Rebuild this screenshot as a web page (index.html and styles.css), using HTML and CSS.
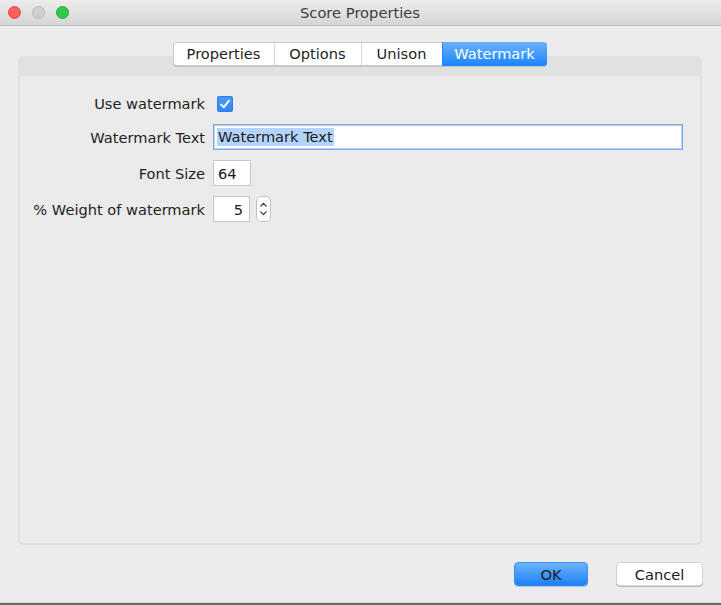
FILE: index.html
```html
<!DOCTYPE html>
<html>
<head>
<meta charset="utf-8">
<title>Score Properties</title>
<link rel="stylesheet" href="styles.css">
</head>
<body>
<div class="window">
  <div class="titlebar">
    <div class="lights">
      <span class="light red"></span>
      <span class="light gray"></span>
      <span class="light green"></span>
    </div>
    <div class="title">Score Properties</div>
  </div>
  <div class="tabs">
    <div class="tab tab-properties">Properties</div>
    <div class="tab tab-options">Options</div>
    <div class="tab tab-unison">Unison</div>
    <div class="tab tab-watermark active">Watermark</div>
  </div>
  <div class="panel">
    <div class="form">
      <div class="label label-top">Use watermark</div>
      <div class="control control-top">
        <span class="checkbox">
          <svg width="16" height="16" viewBox="0 0 16 16"><path d="M4.2 8.6 L6.9 11.3 L11.9 4.6" fill="none" stroke="#fff" stroke-width="1.9" stroke-linecap="round" stroke-linejoin="round"/></svg>
        </span>
      </div>

      <div class="label">Watermark Text</div>
      <div class="control">
        <div class="field field-wide focused"><span class="sel">Watermark Text</span></div>
      </div>

      <div class="label">Font Size</div>
      <div class="control">
        <div class="field field-small">64</div>
      </div>

      <div class="label">% Weight of watermark</div>
      <div class="control">
        <div class="field field-small align-right">5</div>
        <div class="spinner">
          <svg width="15" height="26" viewBox="0 0 15 26"><path d="M4.8 10.2 L7.5 7.4 L10.2 10.2" fill="none" stroke="#333" stroke-width="1.2" stroke-linecap="round" stroke-linejoin="round"/><path d="M4.8 15.8 L7.5 18.6 L10.2 15.8" fill="none" stroke="#333" stroke-width="1.2" stroke-linecap="round" stroke-linejoin="round"/></svg>
        </div>
      </div>
    </div>
  </div>
  <div class="buttons">
    <div class="btn btn-ok">OK</div>
    <div class="btn btn-cancel">Cancel</div>
  </div>
</div>
</body>
</html>
```

FILE: styles.css
```css
html, body {
  margin: 0;
  padding: 0;
}
body {
  background: #ececec;
  font-family: "DejaVu Sans", "Liberation Sans", sans-serif;
  font-size: 14.6px;
  color: #1e1e1e;
}
.window {
  height: 605px;
  box-sizing: border-box;
  display: flex;
  flex-direction: column;
  background: #ececec;
  border-bottom: 2px solid #6a6a6a;
  box-shadow: inset 0 -1px 0 #d6d6d6;
}
.titlebar {
  height: 25px;
  flex: none;
  border-bottom: 1px solid #b8b8b8;
  background: linear-gradient(#ececec, #d6d6d6);
  display: grid;
  grid-template-columns: 1fr;
  align-items: center;
}
.lights, .title {
  grid-row: 1;
  grid-column: 1;
}
.lights {
  display: flex;
  gap: 11px;
  padding-left: 8px;
  align-items: center;
}
.light {
  width: 11px;
  height: 11px;
  border-radius: 50%;
  border: 1px solid transparent;
}
.light.red { background: #fc605c; border-color: #de4a47; }
.light.gray { background: #d0d0d0; border-color: #bcbcbc; }
.light.green { background: #34c84a; border-color: #28aa36; }
.title {
  text-align: center;
  color: #3d3d3d;
  font-size: 14.7px;
  padding-right: 1px;
}
.tabs {
  margin-top: 16px;
  align-self: center;
  display: flex;
  height: 24px;
  box-sizing: border-box;
  background: #fff;
  border: 1px solid #cacaca;
  border-radius: 4px;
  box-shadow: 0 1px 0 #c4c4c4;
  position: relative;
  z-index: 1;
  margin-right: 2px;
}
.tab {
  display: flex;
  align-items: center;
  justify-content: center;
  border-left: 1px solid #d6d6d6;
  color: #1e1e1e;
  line-height: 1;
}
.tab:first-child { border-left: none; }
.tab-properties { width: 100px; }
.tab-options { width: 86px; }
.tab-unison { width: 80px; }
.tab-watermark { width: 104px; }
.tab.active {
  background: linear-gradient(#6ab3fb, #1b83fb);
  color: #fff;
  border-left-color: #2b88f5;
  border-radius: 0 3px 3px 0;
  margin: -1px -1px -1px 0;
}
.panel {
  margin: -10px 19px 0 18px;
  height: 489px;
  box-sizing: border-box;
  flex: none;
  background: #ebebeb;
  border: 2px solid #e1e1e1;
  border-top-width: 20px;
  border-radius: 5px;
}
.form {
  display: grid;
  grid-template-columns: 185px 1fr;
  grid-template-rows: 26px 26px 26px 26px;
  column-gap: 8px;
  row-gap: 10px;
  padding: 12px 17px 0 0;
}
.label {
  text-align: right;
  align-self: center;
  line-height: 17px;
  white-space: nowrap;
}
.label-top {
  align-self: end;
  margin-bottom: 2px;
}
.control {
  display: flex;
  align-items: center;
  gap: 6px;
}
.control-top {
  align-items: flex-end;
  padding-bottom: 2px;
}
.checkbox {
  width: 16px;
  height: 16px;
  margin-left: 4px;
  border-radius: 3px;
  background: linear-gradient(#4a9af8, #2f86f4);
  box-shadow: inset 0 0 0 1px #2a7fe8;
  display: flex;
}
.field {
  height: 26px;
  box-sizing: border-box;
  background: #fff;
  border: 1px solid #c6c6c6;
  display: flex;
  align-items: center;
  padding: 0 4px;
  color: #1a1a1a;
}
.field-wide {
  width: 470px;
  padding-left: 3px;
}
.field.focused {
  border: 1px solid #7eaae4;
  box-shadow: inset 0 0 0 1px #b5cff2;
}
.sel {
  background: #b4d4fc;
  line-height: 18px;
  padding: 0 1px;
}
.field-small {
  width: 38px;
}
.align-right {
  width: 37px;
  justify-content: flex-end;
  padding-right: 6px;
}
.spinner {
  width: 15px;
  height: 26px;
  box-sizing: border-box;
  background: #fff;
  border: 1px solid #c3c3c3;
  border-radius: 5px;
  display: flex;
  align-items: center;
  justify-content: center;
  overflow: hidden;
}
.spinner svg { flex: none; margin-left: -1px; }
.buttons {
  display: flex;
  justify-content: flex-end;
  gap: 28px;
  margin-top: 17px;
  padding-right: 18px;
}
.btn {
  height: 24px;
  box-sizing: border-box;
  border-radius: 4px;
  display: flex;
  align-items: center;
  justify-content: center;
  color: #1a1a1a;
}
.btn-ok {
  width: 74px;
  background: linear-gradient(#6cb4fb, #1d80f8);
  border: 1px solid #3b8ef0;
  box-shadow: 0 1px 0 #9ec3ee;
}
.btn-cancel {
  width: 87px;
  background: #fff;
  border: 1px solid #d0d0d0;
  box-shadow: 0 1px 0 #bdbdbd;
}
```
